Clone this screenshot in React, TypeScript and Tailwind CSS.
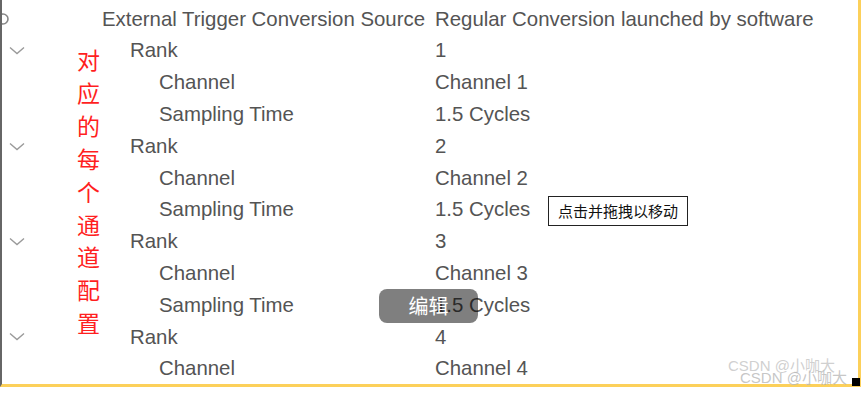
import React from 'react';

interface Row {
  label: string;
  value: string;
  depth: 0 | 1 | 2;
  open?: boolean;
}

const rows: Row[] = [
  { label: 'External Trigger Conversion Source', value: 'Regular Conversion launched by software', depth: 0 },
  { label: 'Rank', value: '1', depth: 1, open: true },
  { label: 'Channel', value: 'Channel 1', depth: 2 },
  { label: 'Sampling Time', value: '1.5 Cycles', depth: 2 },
  { label: 'Rank', value: '2', depth: 1, open: true },
  { label: 'Channel', value: 'Channel 2', depth: 2 },
  { label: 'Sampling Time', value: '1.5 Cycles', depth: 2 },
  { label: 'Rank', value: '3', depth: 1, open: true },
  { label: 'Channel', value: 'Channel 3', depth: 2 },
  { label: 'Sampling Time', value: '1.5 Cycles', depth: 2 },
  { label: 'Rank', value: '4', depth: 1, open: true },
  { label: 'Channel', value: 'Channel 4', depth: 2 },
];

const indent = ['ml-0', 'ml-[28px]', 'ml-[57px]'];

function Chevron() {
  return (
    <svg width="16" height="9" viewBox="0 0 16 9" fill="none">
      <path d="M1 1.5 L8 7.5 L15 1.5" stroke="#9a9a9a" strokeWidth="1.4" />
    </svg>
  );
}

export default function App() {
  const note = '对应的每个通道配置'.split('');
  return (
    <div className="relative w-[866px] h-[393px] bg-white overflow-hidden font-['Liberation_Sans',Arial,sans-serif]">
      <div className="relative w-[861px] h-[387px] overflow-hidden border-l-2 border-l-[#666] border-r-[3px] border-r-[#fcd05a] border-b-[3px] border-b-[#fcd05a] pt-[3px]">
        {rows.map((row, i) => (
          <div key={i} className="flex items-center h-[31.8px] text-[20.4px] text-[#545454] whitespace-nowrap">
            <div className="flex items-center w-[433px]">
              <div className="flex items-center w-[100px] pl-[7px]">
                {i === 0 && (
                  <svg width="12" height="14" viewBox="0 0 12 14" className="-ml-[11px]" fill="none">
                    <circle cx="5" cy="7" r="5" stroke="#888" strokeWidth="1.6" />
                  </svg>
                )}
                {row.open && <Chevron />}
              </div>
              <span className={indent[row.depth]}>{row.label}</span>
            </div>
            <span>{row.value}</span>
          </div>
        ))}
      </div>

      <div className="absolute left-[77px] top-[43px] flex flex-col text-[23px] leading-[32.9px] text-[#ff1f1f] font-['Noto_Sans_CJK_SC',sans-serif]">
        {note.map((c, i) => (
          <span key={i}>{c}</span>
        ))}
      </div>

      <div className="absolute left-[548px] top-[196px] w-[140px] h-[30px] flex items-center justify-center bg-white border border-[#222] text-[15px] text-[#111] font-['Noto_Sans_CJK_SC',sans-serif]">
        点击并拖拽以移动
      </div>

      <div className="absolute left-[379px] top-[289px] w-[99px] h-[34px] rounded-[8px] bg-black/50 flex items-center justify-center text-[20px] text-white font-['Noto_Sans_CJK_SC',sans-serif]">
        编辑
      </div>

      <div className="absolute left-[728px] top-[358px] text-[15px] text-[#c4c4c4]/80 font-['Liberation_Sans','Noto_Sans_CJK_SC',sans-serif] leading-none whitespace-nowrap">
        CSDN @小咖大
      </div>
      <div className="absolute left-[740px] top-[370px] text-[15px] text-[#b8b8b8]/80 font-['Liberation_Sans','Noto_Sans_CJK_SC',sans-serif] leading-none whitespace-nowrap">
        CSDN @小咖大
      </div>

      <div className="absolute left-[852px] top-[378px] w-[8px] h-[8px] bg-black" />
    </div>
  );
}
